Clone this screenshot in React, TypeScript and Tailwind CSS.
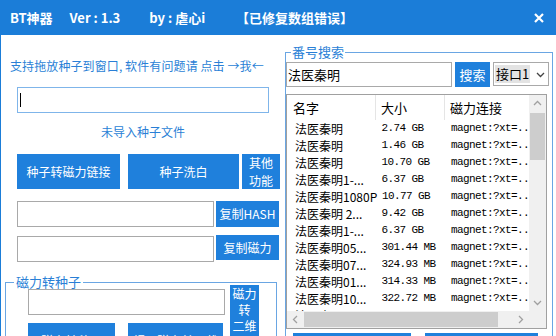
const results: [string, string][] = [
  ["法医秦明", "2.74 GB"],
  ["法医秦明", "1.46 GB"],
  ["法医秦明", "10.70 GB"],
  ["法医秦明1-...", "6.37 GB"],
  ["法医秦明1080P", "10.77 GB"],
  ["法医秦明 2...", "9.42 GB"],
  ["法医秦明1-...", "6.37 GB"],
  ["法医秦明05...", "301.44 MB"],
  ["法医秦明07...", "324.93 MB"],
  ["法医秦明01...", "314.33 MB"],
  ["法医秦明10...", "322.72 MB"],
  ["法医秦明1...", "327.81 MB"],
];

function Chevron({ dir }: { dir: "up" | "down" | "left" | "right" }) {
  const pts = {
    up: "1,6 4.5,2.5 8,6",
    down: "1,3 4.5,6.5 8,3",
    left: "6,1 2.5,4.5 6,8",
    right: "3,1 6.5,4.5 3,8",
  }[dir];
  return (
    <svg width="9" height="9" viewBox="0 0 9 9">
      <polyline points={pts} fill="none" stroke="#a0a0a0" strokeWidth="1.3" />
    </svg>
  );
}

function TitleBar() {
  return (
    <div className="flex items-center h-[35px] bg-[#1b7dd8] text-white font-bold text-[13px] leading-[16px] pl-[10px] pr-[12px] whitespace-nowrap">
      <span>BT神器</span>
      <span className="ml-[17px]">Ver : 1.3</span>
      <span className="ml-[29px]">by : 虐心i</span>
      <span className="ml-[31px]">【已修复数组错误】</span>
      <svg className="ml-auto" width="10" height="10" viewBox="0 0 10 10">
        <path d="M1 1 L9 9 M9 1 L1 9" stroke="white" strokeWidth="2.2" />
      </svg>
    </div>
  );
}

const btn = "flex shrink-0 items-center justify-center bg-[#1f80dc] text-white text-[12px] leading-[16px] whitespace-nowrap";

function LeftPanel() {
  return (
    <div className="w-[281px] shrink-0">
      <p className="mt-[23px] ml-[9px] text-[12px] leading-[16px] tracking-[0.1px] text-[#2a7fd6] whitespace-nowrap">
        支持拖放种子到窗口, 软件有问题请 点击 →我←
      </p>
      <div className="mt-[13px] ml-[16px] w-[252px] h-[26px] border border-[#7fb5ea] flex items-center pl-[2px]">
        <span className="w-px h-[14px] bg-black" />
      </div>
      <p className="mt-[11px] ml-[16px] w-[252px] text-center text-[12px] leading-[16px] text-[#2a7fd6]">
        未导入种子文件
      </p>
      <div className="mt-[14px] ml-[16px] flex h-[35px]">
        <button className={`${btn} w-[103px]`}>种子转磁力链接</button>
        <button className={`${btn} w-[111px] ml-[8px]`}>种子洗白</button>
        <button className={`${btn} w-[38px] ml-[3px] leading-[18px] flex-col`}>
          <span>其他</span>
          <span>功能</span>
        </button>
      </div>
      <div className="mt-[12px] ml-[16px] flex h-[26px]">
        <div className="w-[197px] border border-[#a9a9a9]" />
        <button className={`${btn} w-[63px] ml-[2px]`}>复制HASH</button>
      </div>
      <div className="mt-[9px] ml-[16px] flex items-start h-[26px]">
        <div className="w-[197px] h-[26px] border border-[#a9a9a9]" />
        <button className={`${btn} w-[63px] h-[25px] ml-[2px] -mt-px`}>复制磁力</button>
      </div>
      <fieldset className="mt-[13px] ml-[4px] w-[272px] h-[120px] border border-[#6aa6e3]">
        <legend className="ml-[8px] px-[2px] text-[13px] leading-[14px] text-[#2a7fd6]">磁力转种子</legend>
        <div className="-mt-[4px] flex items-start">
          <div className="ml-[22px] mt-[4px] shrink-0">
            <div className="w-[197px] h-[26px] border border-[#a9a9a9]" />
            <div className="mt-[8px] flex h-[35px]">
              <button className={`${btn} w-[87px]`}>磁力转种子</button>
              <button className={`${btn} w-[95px] ml-[13px]`}>提取磁力并下载</button>
            </div>
          </div>
          <button className={`${btn} flex-col w-[29px] h-[60px] ml-[5px] justify-start text-[12px] leading-[16.5px] pt-px`}>
            <span>磁力</span>
            <span>转</span>
            <span>二维</span>
          </button>
        </div>
      </fieldset>
    </div>
  );
}

function ResultList() {
  return (
    <div className="mt-[7px] w-[261px] h-[235px] border border-[#a0a0a0] flex flex-col bg-white">
      <div className="flex flex-1 min-h-0">
        <div className="flex-1 overflow-hidden">
          <div className="flex h-[25px] items-center text-[13px] leading-[16px] text-black">
            <div className="w-[89px] pl-[6px] h-full flex items-center border-r border-[#e5e5e5]">名字</div>
            <div className="w-[69px] pl-[5px] h-full flex items-center border-r border-[#e5e5e5]">大小</div>
            <div className="flex-1 pl-[5px] whitespace-nowrap">磁力连接</div>
          </div>
          {results.map(([name, size], i) => (
            <div key={i} className="flex h-[17px] items-center whitespace-nowrap text-black">
              <div className="w-[89px] pl-[8px] text-[12px] leading-[17px]">{name}</div>
              <div className="w-[69px] pl-[6px] font-['Liberation_Mono',monospace] text-[11px] tracking-[-0.6px] leading-[17px]">
                {size}
              </div>
              <div className="flex-1 pl-[7px] font-['Liberation_Mono',monospace] text-[11px] tracking-[-0.6px] leading-[17px]">
                magnet:?xt=..
              </div>
            </div>
          ))}
        </div>
        <div className="w-[17px] bg-[#f0f0f0] flex flex-col">
          <div className="h-[17px] flex items-center justify-center">
            <Chevron dir="up" />
          </div>
          <div className="mt-px mx-[1px] h-[47px] bg-[#cdcdcd]" />
          <div className="mt-auto h-[17px] flex items-center justify-center">
            <Chevron dir="down" />
          </div>
        </div>
      </div>
      <div className="h-[17px] shrink-0 flex bg-[#f0f0f0]">
        <div className="w-[17px] flex items-center justify-center">
          <Chevron dir="left" />
        </div>
        <div className="w-[194px] my-[1px] bg-[#cdcdcd]" />
        <div className="ml-auto w-[17px] flex items-center justify-center">
          <Chevron dir="right" />
        </div>
        <div className="w-[17px]" />
      </div>
    </div>
  );
}

function RightPanel() {
  return (
    <div className="flex-1">
      <fieldset className="ml-[3px] mt-[10px] w-[268px] h-[340px] border border-[#6aa6e3]">
        <legend className="ml-[5px] px-[1px] text-[13px] leading-[14px] text-[#2a7fd6]">番号搜索</legend>
        <div className="mt-[3px] flex h-[25px]">
          <div className="w-[166px] border border-[#a9a9a9] flex items-center pl-[1px] text-[13px] leading-[16px] text-black">
            法医秦明
          </div>
          <button className={`${btn} w-[35px] ml-[3px] text-[13px]`}>搜索</button>
          <div className="ml-[3px] w-[56px] h-[24px] border border-[#a9a9a9] flex items-center pl-[1px] pr-[3px]">
            <span className="bg-[#e3e3e3] px-[1px] text-[13px] leading-[18px] text-black">接口1</span>
            <span className="ml-auto flex">
              <svg width="9" height="9" viewBox="0 0 9 9">
                <polyline points="1,3 4.5,6.5 8,3" fill="none" stroke="#444" strokeWidth="1.3" />
              </svg>
            </span>
          </div>
        </div>
        <ResultList />
        <div className="mt-[4px] ml-[7px] flex h-[35px] items-end">
          <button className={`${btn} w-[118px] h-[35px] items-end pb-[8px]`}>下载种子</button>
          <button className={`${btn} w-[113px] h-[35px] ml-[14px] items-end pb-[8px]`}>复制磁力</button>
        </div>
      </fieldset>
    </div>
  );
}

export default function App() {
  return (
    <div className="w-[556px] h-[336px] overflow-hidden bg-white font-['Noto_Sans_CJK_SC','Noto_Sans',sans-serif]">
      <TitleBar />
      <div className="flex h-[301px] border-l border-[#1b7dd8]">
        <LeftPanel />
        <RightPanel />
      </div>
    </div>
  );
}
